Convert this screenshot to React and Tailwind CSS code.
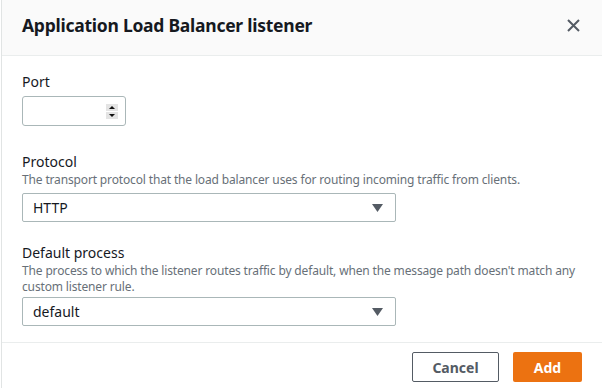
import React, { useState } from "react";

function SelectBox({ value }) {
  return (
    <div className="relative w-[374px] h-[29px] border border-[#aab7b8] rounded-[2px] bg-white flex items-center pl-[10px]">
      <span className="text-[14px] text-[#16191f]">{value}</span>
      <svg className="absolute right-[12px] top-[10px]" width="11" height="8" viewBox="0 0 11 8">
        <path d="M0 0 H11 L5.5 8 Z" fill="#545b64" />
      </svg>
    </div>
  );
}

export default function App() {
  const [port, setPort] = useState("");

  return (
    <div
      className="w-[602px] h-[388px] bg-white flex flex-col border-l border-[#e1e4e4] ml-[1px] text-[#16191f] overflow-hidden"
      style={{ fontFamily: '"Noto Sans", "Open Sans", sans-serif' }}
    >
      <div className="h-[56px] bg-[#fafafa] border-b border-[#eaeded] flex items-center justify-between pl-[20px] pr-[23px] pb-[4px]">
        <h2 className="text-[17.5px] font-bold tracking-[-0.25px]">Application Load Balancer listener</h2>
        <svg width="13" height="13" viewBox="0 0 13 13">
          <path d="M1 1 L12 12 M12 1 L1 12" stroke="#545b64" strokeWidth="2" />
        </svg>
      </div>

      <div className="flex-1 pl-[20px] pt-[16px]">
        <div className="text-[14px] leading-[20px]">Port</div>
        <div className="mt-[4px] w-[104px] h-[30px] border border-[#aab7b8] rounded-[3px] flex items-center justify-end pr-[7px]">
          <input
            value={port}
            onChange={(e) => setPort(e.target.value)}
            className="w-[70px] outline-none text-[14px]"
          />
          <div className="flex flex-col w-[12px] h-[15px] bg-[#e4e4e4]">
            <div className="flex-1 flex items-center justify-center border-b border-white">
              <svg width="6" height="3" viewBox="0 0 6 3"><path d="M0 3 L3 0 L6 3 Z" fill="#111" /></svg>
            </div>
            <div className="flex-1 flex items-center justify-center">
              <svg width="6" height="3" viewBox="0 0 6 3"><path d="M0 0 L3 3 L6 0 Z" fill="#111" /></svg>
            </div>
          </div>
        </div>

        <div className="mt-[26px] text-[14px] leading-[20px]">Protocol</div>
        <div className="text-[12px] leading-[16px] text-[#687078] tracking-[-0.15px]">
          The transport protocol that the load balancer uses for routing incoming traffic from clients.
        </div>
        <div className="mt-[5px]">
          <SelectBox value="HTTP" />
        </div>

        <div className="mt-[21px] text-[14px] leading-[20px]">Default process</div>
        <div className="text-[12px] leading-[16px] text-[#687078] tracking-[-0.15px] w-[560px]">
          The process to which the listener routes traffic by default, when the message path doesn't match any custom listener rule.
        </div>
        <div className="mt-[2px]">
          <SelectBox value="default" />
        </div>
      </div>

      <div className="h-[46px] border-t border-[#eaeded] flex justify-end items-start pt-[9px] pr-[21px] gap-[14px]">
        <button className="h-[30px] w-[87px] border border-[#545b64] rounded-[2px] text-[14px] font-bold text-[#545b64]">
          Cancel
        </button>
        <button className="h-[30px] w-[69px] bg-[#ec7211] rounded-[2px] text-[14px] font-bold text-white">
          Add
        </button>
      </div>
    </div>
  );
}
